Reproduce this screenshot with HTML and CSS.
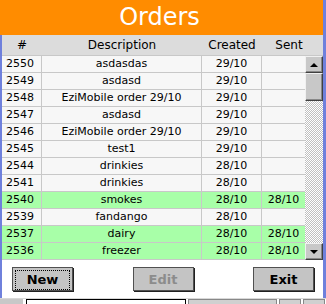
FILE: index.html
```html
<!DOCTYPE html>
<html lang="en">
<head>
    <meta charset="UTF-8">
    <meta name="viewport" content="width=device-width, initial-scale=1.0">
    <title>Orders</title>
    <link rel="stylesheet" href="styles.css">
</head>
<body>
    <div class="screen">
        <div class="title">Orders</div>
        <div class="main">
            <div class="head">
                <div class="c-id">#</div>
                <div class="c-desc">Description</div>
                <div class="c-created">Created</div>
                <div class="c-sent">Sent</div>
            </div>
            <div class="grid">
                <div class="rows">
                    <div class="row"><div class="c-id">2550</div><div class="c-desc">asdasdas</div><div class="c-created">29/10</div><div class="c-sent"></div></div>
                    <div class="row"><div class="c-id">2549</div><div class="c-desc">asdasd</div><div class="c-created">29/10</div><div class="c-sent"></div></div>
                    <div class="row"><div class="c-id">2548</div><div class="c-desc">EziMobile order 29/10</div><div class="c-created">29/10</div><div class="c-sent"></div></div>
                    <div class="row"><div class="c-id">2547</div><div class="c-desc">asdasd</div><div class="c-created">29/10</div><div class="c-sent"></div></div>
                    <div class="row"><div class="c-id">2546</div><div class="c-desc">EziMobile order 29/10</div><div class="c-created">29/10</div><div class="c-sent"></div></div>
                    <div class="row"><div class="c-id">2545</div><div class="c-desc">test1</div><div class="c-created">29/10</div><div class="c-sent"></div></div>
                    <div class="row"><div class="c-id">2544</div><div class="c-desc">drinkies</div><div class="c-created">28/10</div><div class="c-sent"></div></div>
                    <div class="row"><div class="c-id">2541</div><div class="c-desc">drinkies</div><div class="c-created">28/10</div><div class="c-sent"></div></div>
                    <div class="row sent"><div class="c-id">2540</div><div class="c-desc">smokes</div><div class="c-created">28/10</div><div class="c-sent">28/10</div></div>
                    <div class="row"><div class="c-id">2539</div><div class="c-desc">fandango</div><div class="c-created">28/10</div><div class="c-sent"></div></div>
                    <div class="row sent"><div class="c-id">2537</div><div class="c-desc">dairy</div><div class="c-created">28/10</div><div class="c-sent">28/10</div></div>
                    <div class="row sent"><div class="c-id">2536</div><div class="c-desc">freezer</div><div class="c-created">28/10</div><div class="c-sent">28/10</div></div>
                </div>
                <div class="scrollbar">
                    <div class="sb-btn"><span class="arrow-up"></span></div>
                    <div class="sb-thumb"></div>
                    <div class="sb-track"></div>
                    <div class="sb-btn"><span class="arrow-down"></span></div>
                </div>
            </div>
            <div class="buttons">
                <button class="button focused"><span>New</span></button>
                <button class="button" disabled><span>Edit</span></button>
                <button class="button"><span>Exit</span></button>
            </div>
        </div>
    </div>
    <div class="taskbar">
        <div class="tb-start"></div>
        <div class="tb-input"></div>
        <div class="tb-field"></div>
        <div class="tb-key"></div>
        <div class="tb-key"></div>
    </div>
</body>
</html>
```

FILE: styles.css
```css
body {
    margin: 0;
    padding: 0;
    width: 326px;
    height: 304px;
    overflow: hidden;
    background-color: white;
    font-family: 'DejaVu Sans', sans-serif;
}

.screen {
    height: 298px;
    border-right: 3px solid #6f80dc;
    display: flex;
    flex-direction: column;
}

.title {
    height: 35px;
    background-color: #ff8c00;
    color: white;
    font-size: 24px;
    line-height: 34px;
    text-align: center;
    padding-right: 4px;
}

.main {
    flex: 1;
    border-left: 2px solid #6f80dc;
    display: flex;
    flex-direction: column;
}

.head {
    height: 20px;
    background-color: #dcdcdc;
    display: flex;
    font-size: 12px;
    line-height: 20px;
    color: black;
}

.head > div {
    text-align: center;
}

.c-id {
    width: 40px;
}

.c-desc {
    width: 160px;
}

.c-created {
    width: 60px;
}

.c-sent {
    width: 43px;
}

.head .c-sent {
    width: 54px; /* header runs over the scrollbar */
}

.grid {
    display: flex;
    border-top: 1px solid #c8c8c8;
}

.rows {
    width: 303px;
}

.row {
    display: flex;
    height: 16px;
    border-bottom: 1px solid #c8c8c8;
    background-color: #f7f7f7;
    font-size: 11px;
    line-height: 16px;
}

.row.sent {
    background-color: #a8ffa8;
}

.row > div {
    text-align: center;
    border-right: 1px solid #c8c8c8;
    box-sizing: border-box;
    white-space: nowrap;
    overflow: hidden;
}

.row > .c-id {
    text-align: left;
    padding-left: 4px;
}

.row > .c-sent {
    border-right: none;
}

.scrollbar {
    width: 18px;
    height: 204px;
    display: flex;
    flex-direction: column;
}

.sb-btn, .sb-thumb {
    background-color: #c8c8c8;
    border: 1px solid #404040;
    border-top-color: #f0f0f0;
    border-left-color: #f0f0f0;
    box-shadow: inset -1px -1px 0 #888;
    box-sizing: border-box;
}

.sb-btn {
    height: 17px;
    display: flex;
    align-items: center;
    justify-content: center;
}

.sb-thumb {
    height: 28px;
}

.sb-track {
    flex: 1;
    background: repeating-conic-gradient(#c0c0c0 0 25%, #ffffff 0 50%) 0 0 / 2px 2px;
}

.arrow-up {
    width: 0;
    height: 0;
    border-left: 4px solid transparent;
    border-right: 4px solid transparent;
    border-bottom: 4px solid black;
}

.arrow-down {
    width: 0;
    height: 0;
    border-left: 4px solid transparent;
    border-right: 4px solid transparent;
    border-top: 4px solid black;
}

.buttons {
    display: flex;
    justify-content: space-between;
    padding: 7px 9px 0 10px;
}

.button {
    width: 61px;
    height: 24px;
    padding: 2px;
    background-color: #c4c4c4;
    border: 1px solid #505050;
    box-shadow: 1px 1px 0 #202020;
    font-family: 'DejaVu Sans', sans-serif;
    font-size: 13px;
    font-weight: bold;
    color: black;
}

.button span {
    display: block;
    height: 18px;
    line-height: 18px;
    border: 1px solid transparent;
}

.button.focused span {
    border: 1px dotted black;
}

.button:disabled {
    color: #8c8c8c;
}

.taskbar {
    height: 6px;
    display: flex;
    gap: 2px;
    border-top: 1px solid #d8d8d8;
    background-color: white;
}

.tb-start {
    width: 23px;
    background-color: #c8c8c8;
}

.tb-input {
    width: 158px;
    margin-left: 1px;
    border: 1px solid black;
    border-bottom: none;
    background-color: white;
}

.tb-field {
    width: 87px;
    border: 1px solid #888;
    border-bottom: none;
    background-color: #d0d0d0;
}

.tb-key {
    width: 20px;
    border: 1px solid #888;
    border-bottom: none;
    background-color: #d0d0d0;
}
```
